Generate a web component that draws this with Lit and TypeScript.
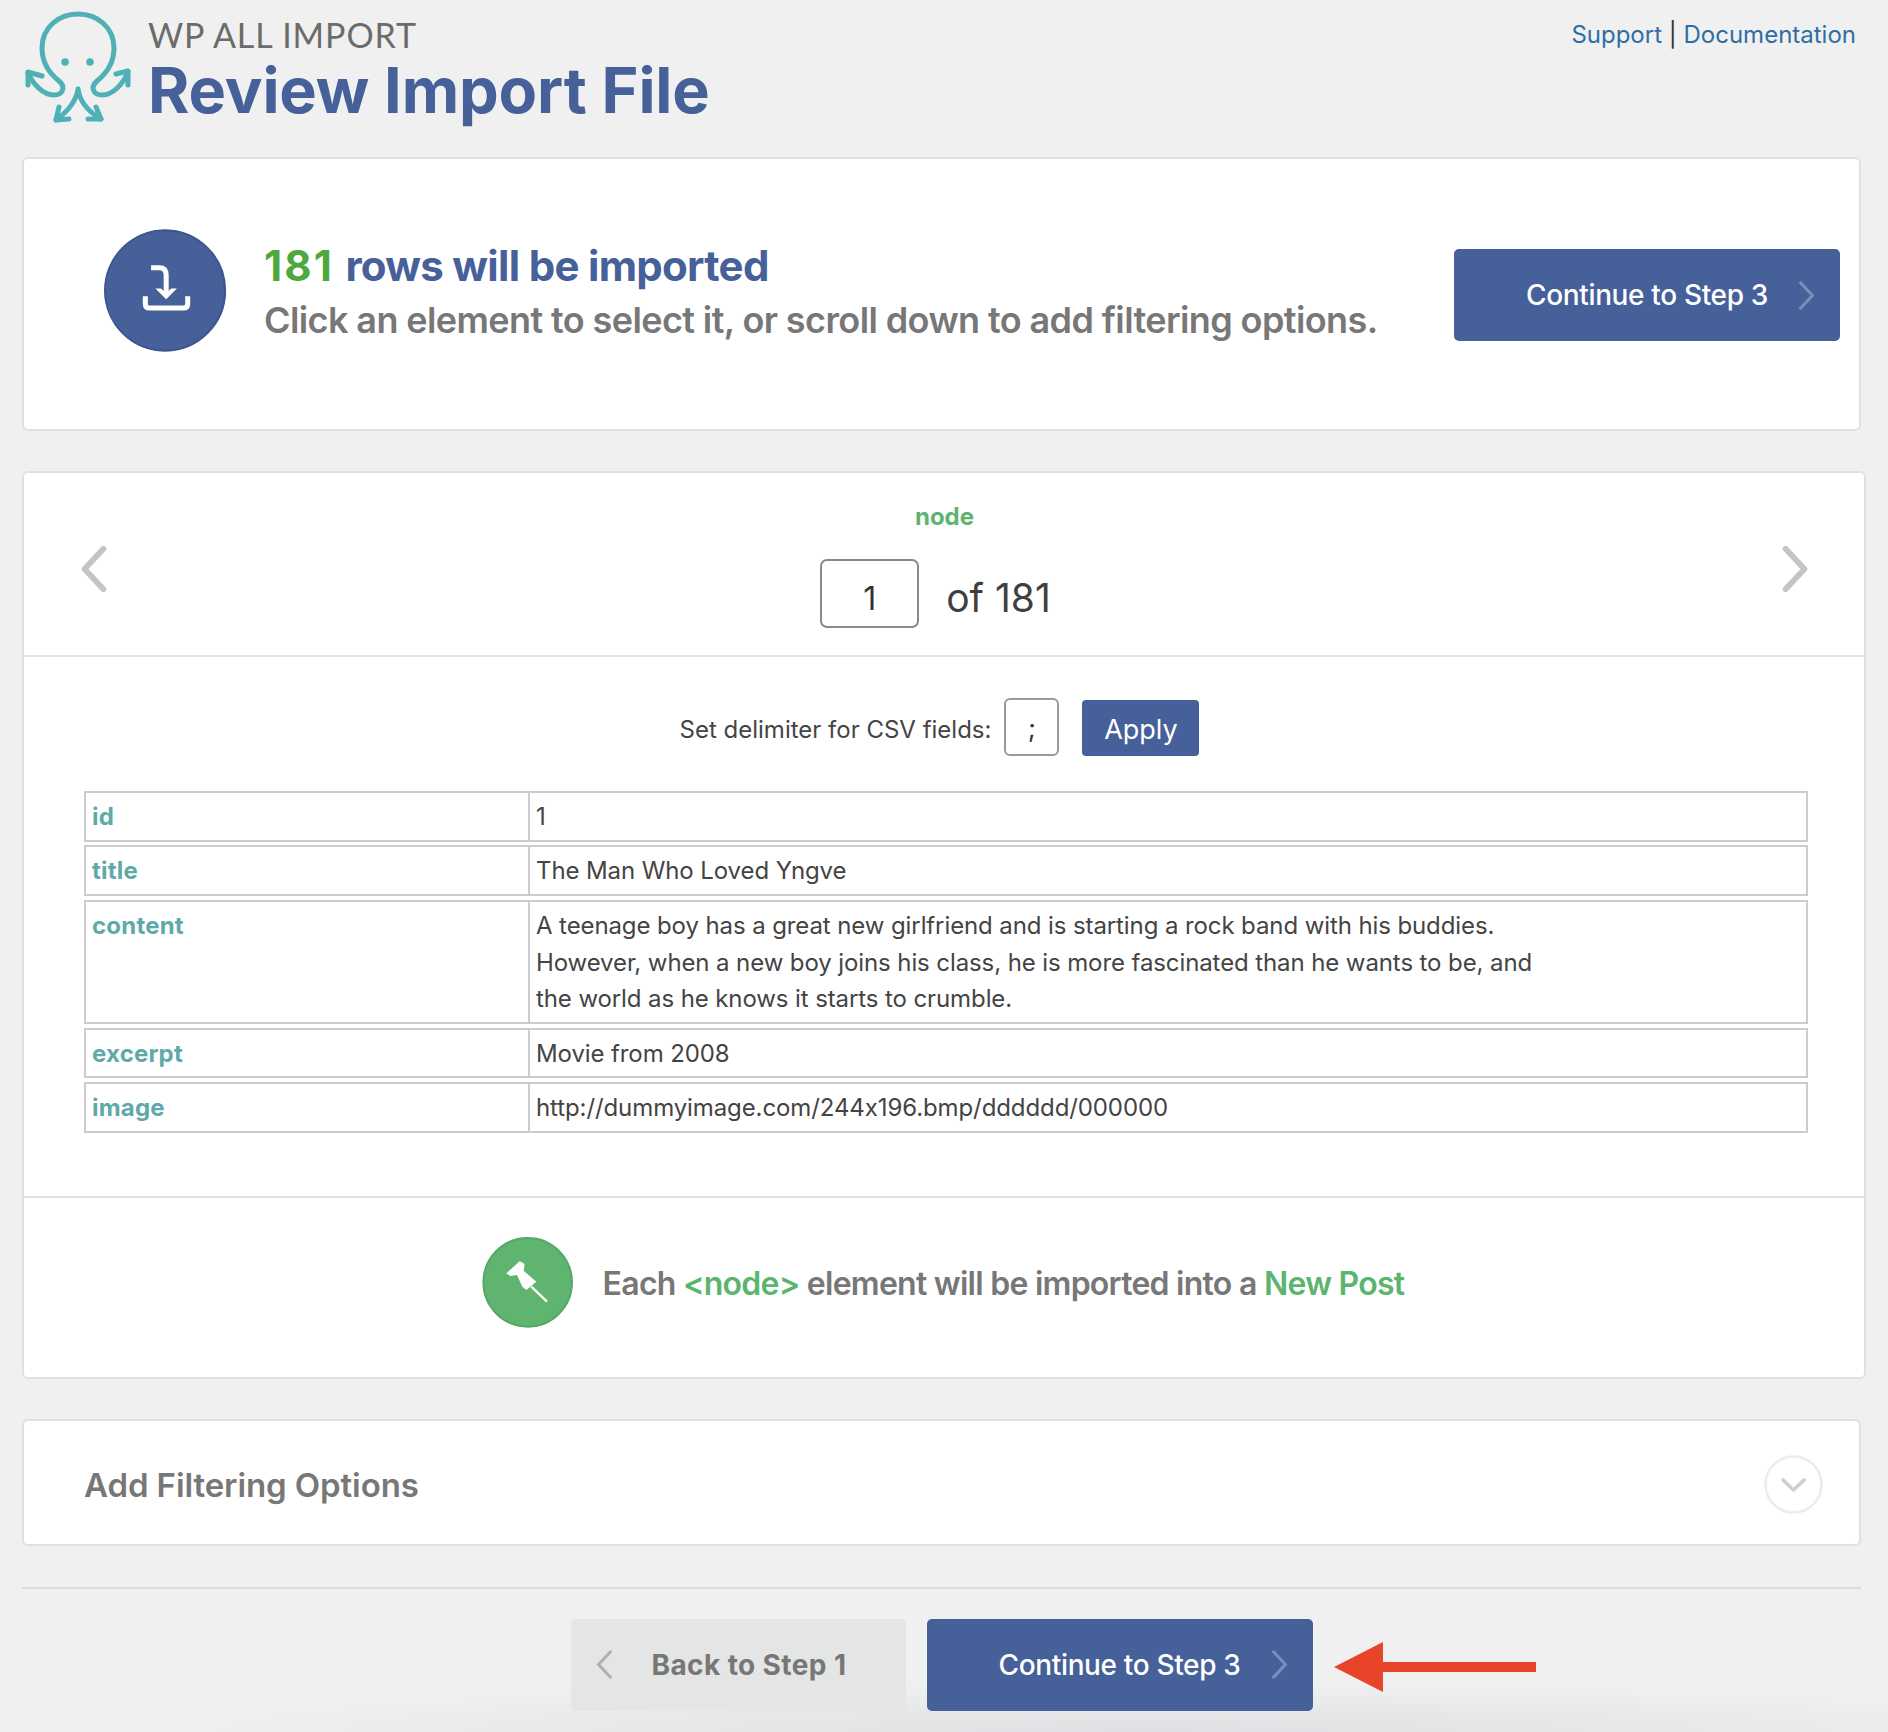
import { LitElement, html, css, svg } from 'lit';
import { customElement } from 'lit/decorators.js';

const ROWS: [string, unknown][] = [
  ['id', '1'],
  ['title', 'The Man Who Loved Yngve'],
  [
    'content',
    html`A teenage boy has a great new girlfriend and is starting a rock band with his buddies.<br />
      However, when a new boy joins his class, he is more fascinated than he wants to be, and<br />
      the world as he knows it starts to crumble.`,
  ],
  ['excerpt', 'Movie from 2008'],
  ['image', 'http://dummyimage.com/244x196.bmp/dddddd/000000'],
];

const chevron = (cls: string, points: string) => html`<svg class=${cls} viewBox="0 0 20 34" fill="none">
  ${svg`<polyline points=${points} stroke="currentColor" stroke-linecap="round" stroke-linejoin="round"></polyline>`}
</svg>`;
const RIGHT = '3,2 17,17 3,32';
const LEFT = '17,2 3,17 17,32';

@customElement('app-root')
export class AppRoot extends LitElement {
  static override styles = css`
    :host {
      display: block;
      position: relative;
      width: 1888px;
      height: 1732px;
      overflow: hidden;
      padding: 0 23px 0 22px;
      box-sizing: border-box;
      background: radial-gradient(ellipse 1000px 50px at 1150px 100%, #dfe0e3, rgba(223, 224, 227, 0)), #f0f0f0;
      font-family: Inter, 'Liberation Sans', sans-serif;
      color: #444;
    }

    polyline {
      stroke-width: 3.6;
    }

    /* header */
    .header {
      height: 157px;
      display: flex;
      align-items: flex-start;
    }
    .logo {
      width: 140px;
      height: 140px;
      margin-left: -21px;
      flex: none;
    }
    .brand {
      margin-left: 7px;
    }
    .brand-name {
      font-family: Lato, sans-serif;
      font-size: 34px;
      line-height: 40px;
      margin-top: 15px;
      color: #6b6b6b;
      letter-spacing: 0.9px;
    }
    h1 {
      margin: 0;
      font-size: 63px;
      line-height: 70px;
      font-weight: 700;
      letter-spacing: -0.13px;
      color: #46609a;
    }
    .links {
      margin-left: auto;
      margin-top: 19px;
      margin-right: 9px;
      font-size: 24px;
      line-height: 32px;
      color: #333;
    }
    .links a {
      color: #2f6ea5;
      text-decoration: none;
    }

    /* cards */
    .card {
      box-sizing: border-box;
      background: #fff;
      border: 2px solid #e0e0e0;
      border-radius: 6px;
      width: 1839px;
    }
    .card.wide {
      width: 1844px;
      margin-top: 40px;
    }

    .summary {
      height: 274px;
      display: flex;
      align-items: center;
      padding: 0 19px 0 80px;
    }
    .summary .btn {
      margin-top: 2px;
    }
    .circle {
      flex: none;
      border-radius: 50%;
    }
    .circle.blue {
      width: 123px;
      height: 123px;
      margin-top: -8px;
    }
    .summary-text {
      margin-left: 37px;
      margin-top: -3px;
    }
    .summary-title {
      font-size: 42px;
      line-height: 54px;
      font-weight: 700;
      letter-spacing: -0.7px;
      color: #46609a;
    }
    .summary-title b {
      color: #4fa83d;
      font-weight: 700;
      letter-spacing: 2.2px;
      margin-right: 2px;
    }
    .summary-sub {
      font-size: 36px;
      line-height: 54px;
      font-weight: 600;
      letter-spacing: -0.6px;
      color: #777;
    }

    .btn {
      box-sizing: border-box;
      display: flex;
      align-items: center;
      flex: none;
      height: 92px;
      border-radius: 5px;
      font-size: 28px;
      font-weight: 500;
      letter-spacing: -0.35px;
    }
    .btn.primary {
      width: 386px;
      padding: 0 25px 0 72px;
      background: #46609a;
      color: #fff;
      margin-left: auto;
    }
    .btn.back {
      width: 335px;
      padding: 0 0 0 25px;
      background: #e4e5e5;
      color: #777;
      font-weight: 700;
      letter-spacing: 0.4px;
    }
    .btn .chev {
      width: 17px;
      height: 29px;
      color: #7d8fb9;
      margin-left: auto;
    }
    .btn.back .chev {
      color: #b0b0b0;
      margin-left: 0;
      margin-right: 39px;
    }

    /* node navigation */
    .nav {
      height: 182px;
      border-bottom: 2px solid #e2e2e2;
      display: flex;
      align-items: center;
      justify-content: space-between;
      padding: 0 53px 0 54px;
    }
    .nav-chev {
      width: 32px;
      height: 46px;
      color: #c4c4c4;
      margin-top: 10px;
    }
    .nav-chev polyline {
      stroke-width: 4.2;
    }
    .nav-mid {
      display: flex;
      flex-direction: column;
      align-items: center;
      margin-top: 2px;
    }
    .node {
      font-size: 24px;
      line-height: 30px;
      font-weight: 700;
      color: #5cb56e;
    }
    .pager {
      display: flex;
      align-items: center;
      gap: 27px;
      margin-top: 27px;
      margin-left: -18px;
    }
    input {
      box-sizing: border-box;
      font-family: inherit;
      background: #fff;
      text-align: center;
      color: #333;
      padding: 0;
      outline: none;
    }
    .pager input {
      width: 99px;
      height: 69px;
      border: 2px solid #8a8a8a;
      border-radius: 7px;
      font-size: 32px;
      padding-top: 10px;
    }
    .of {
      font-size: 39px;
      padding-top: 8px;
      color: #3f3f3f;
    }

    /* body */
    .body {
      padding: 41px 56px 63px 60px;
      border-bottom: 2px solid #e2e2e2;
    }
    .delim {
      display: flex;
      align-items: center;
      justify-content: center;
      height: 58px;
      font-size: 24px;
      margin-left: -13px;
    }
    .delim span {
      padding-top: 4px;
    }
    .delim input {
      width: 55px;
      height: 58px;
      border: 2px solid #9a9a9a;
      border-radius: 6px;
      margin: 0 23px 0 13px;
      font-size: 26px;
    }
    .apply {
      box-sizing: border-box;
      width: 117px;
      height: 56px;
      margin-top: 2px;
      padding-top: 2px;
      border-radius: 4px;
      background: #46609a;
      color: #fff;
      font-size: 27px;
      display: flex;
      align-items: center;
      justify-content: center;
    }
    .table {
      margin-top: 35px;
      display: flex;
      flex-direction: column;
      gap: 3.9px;
      width: 1724px;
    }
    .row {
      display: grid;
      grid-template-columns: 444px 1fr;
      border: 2px solid #ccc;
      font-size: 24px;
      line-height: 36.6px;
      letter-spacing: -0.1px;
    }
    .row > div {
      padding: 6px 6px 4px;
    }
    .key {
      font-weight: 700;
      color: #5fa9ab;
      border-right: 2px solid #ccc;
      letter-spacing: 0.2px;
    }

    .foot {
      height: 179px;
      padding: 0 2px 8px 0;
      box-sizing: border-box;
      display: flex;
      align-items: center;
      justify-content: center;
      font-size: 32px;
      font-weight: 600;
      letter-spacing: -0.74px;
      color: #777;
    }
    .circle.green {
      width: 92px;
      height: 92px;
      margin: -2px 29px 0 0;
    }
    .foot em {
      font-style: normal;
      color: #5cb56e;
    }

    .filter {
      height: 127px;
      margin-top: 40px;
      padding: 5px 36px 0 60px;
      display: flex;
      align-items: center;
      justify-content: space-between;
      font-size: 33px;
      font-weight: 600;
      letter-spacing: -0.1px;
      color: #777;
    }
    .toggle {
      width: 59px;
      height: 59px;
    }

    .rule {
      height: 2px;
      width: 1839px;
      margin-top: 41px;
      background: #dcdcdc;
    }
    .actions {
      position: relative;
      width: 1839px;
      margin-top: 30px;
      display: flex;
      justify-content: center;
      gap: 21px;
    }
    .actions .btn.primary {
      margin-left: 0;
    }
    .arrow {
      position: absolute;
      left: 1312px;
      top: 23px;
      width: 202px;
      height: 50px;
    }
  `;

  private _octopus() {
    return html`<svg class="logo" viewBox="0 0 140 140" fill="none" stroke="#4fb0b5" stroke-width="5" stroke-linecap="round" stroke-linejoin="round">
      <path d="M27 73 C32 84 42 95 53 95 C62 95 65 87 58 81 C48 73 41 62 41 48 C41 28 57 14 77 14 C97 14 113 28 113 48 C113 62 106 73 96 81 C89 87 92 95 101 95 C112 95 122 84 127 72" />
      <path d="M27 85 L27 72 L41 76 M115 74 L127 71 L127 85" />
      <path d="M77 89 C75 103 66 112 55 120 M77 89 C79 103 88 112 100 119" />
      <path d="M58 107 L55 120 L68 119 M95 107 L100 119 L87 119" />
      <circle cx="64" cy="62" r="3.8" fill="#4fb0b5" stroke="none" />
      <circle cx="89" cy="62" r="3.8" fill="#4fb0b5" stroke="none" />
    </svg>`;
  }

  private _download() {
    return html`<svg class="circle blue" viewBox="40 45 366 366">
      <circle cx="221" cy="228" r="179" fill="#46609a" stroke="#3f5690" stroke-width="7" />
      <path d="M180 160 H205 Q225 160 225 182 V240" fill="none" stroke="#fff" stroke-width="15" />
      <path d="M193 222 L225 254 L257 222 L240 222 L225 236 L210 222 Z" fill="#fff" />
      <path d="M163 245 V268 Q163 280 176 280 H276 Q289 280 289 268 V245" fill="none" stroke="#fff" stroke-width="15" />
    </svg>`;
  }

  private _pin() {
    return html`<svg class="circle green" viewBox="37 38 276 276">
      <circle cx="174" cy="177" r="133" fill="#5fb46f" stroke="#56a866" stroke-width="6" />
      <path d="M150 114 L110 150 L122 158 L142 155 L158 190 L170 200 L200 175 L188 165 L162 142 L165 122 Z" fill="#fff" />
      <path d="M185 190 L232 235" stroke="#fff" stroke-width="7" />
    </svg>`;
  }

  override render() {
    return html`
      <div class="header">
        ${this._octopus()}
        <div class="brand">
          <div class="brand-name">WP ALL IMPORT</div>
          <h1>Review Import File</h1>
        </div>
        <div class="links"><a href="#">Support</a> | <a href="#">Documentation</a></div>
      </div>

      <section class="card summary">
        ${this._download()}
        <div class="summary-text">
          <div class="summary-title"><b>181</b> rows will be imported</div>
          <div class="summary-sub">Click an element to select it, or scroll down to add filtering options.</div>
        </div>
        <div class="btn primary">Continue to Step 3 ${chevron('chev', RIGHT)}</div>
      </section>

      <section class="card wide">
        <div class="nav">
          ${chevron('nav-chev', LEFT)}
          <div class="nav-mid">
            <div class="node">node</div>
            <div class="pager">
              <input value="1" />
              <span class="of">of 181</span>
            </div>
          </div>
          ${chevron('nav-chev', RIGHT)}
        </div>
        <div class="body">
          <div class="delim">
            <span>Set delimiter for CSV fields:</span>
            <input value=";" />
            <div class="apply">Apply</div>
          </div>
          <div class="table">
            ${ROWS.map(
              ([k, v]) => html`<div class="row">
                <div class="key">${k}</div>
                <div>${v}</div>
              </div>`
            )}
          </div>
        </div>
        <div class="foot">
          ${this._pin()}
          <span>Each <em>&lt;node&gt;</em> element will be imported into a <em>New Post</em></span>
        </div>
      </section>

      <section class="card filter">
        Add Filtering Options
        <svg class="toggle" viewBox="0 0 59 59" fill="none">
          <circle cx="29.5" cy="29.5" r="28" stroke="#ececec" stroke-width="2.5" />
          <polyline points="19,25 29.5,35 40,25" stroke="#cfcfcf" stroke-linecap="round" stroke-linejoin="round" />
        </svg>
      </section>

      <div class="rule"></div>
      <div class="actions">
        <div class="btn back">${chevron('chev', LEFT)}Back to Step 1</div>
        <div class="btn primary">Continue to Step 3 ${chevron('chev', RIGHT)}</div>
        <svg class="arrow" viewBox="0 0 202 50">
          <path d="M0 25 L49 0 V20 H202 V30 H49 V50 Z" fill="#e8442a" />
        </svg>
      </div>
    `;
  }
}
